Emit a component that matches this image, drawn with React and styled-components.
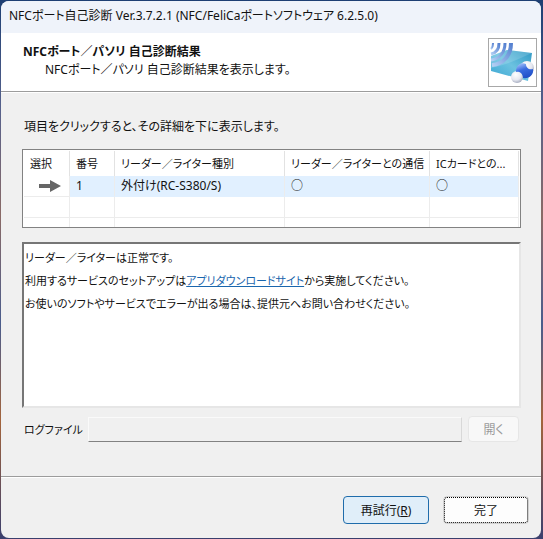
import styled, { createGlobalStyle } from "styled-components";

const colors = {
  face: "#f0f0f0",
  titleBar: "#eff3fa",
  text: "#111",
  shadow: "#828282",
  grid: "#ececec",
  selected: "#e1f0ff",
  link: "#1a66ad",
};

const GlobalStyle = createGlobalStyle`
  * {
    box-sizing: border-box;
  }
  body {
    margin: 0;
    color: ${colors.text};
    font-family: "Noto Sans", "Noto Sans CJK JP", sans-serif;
    font-size: 12px;
    font-feature-settings: "palt";
  }
  button, input {
    font: inherit;
    font-feature-settings: inherit;
    color: inherit;
  }
`

const Desktop = styled.div`
  display: flex;
  min-height: 100vh;
  padding: 1px 2px 1px 1px;
  background: linear-gradient(180deg, #1d3f73 0%, #56618c 20%, #8a6a66 40%, #4a5c8c 60%, #a3643c 78%, #3a3f6e 100%);
`

const Window = styled.main`
  flex: 1;
  min-width: 0;
  display: flex;
  flex-direction: column;
  background: ${colors.face};
  border-radius: 8px;
  overflow: hidden;
`

const TitleBar = styled.header`
  height: 32px;
  padding: 0 8px;
  line-height: 30px;
  background: ${colors.titleBar};
`

const Banner = styled.section`
  display: flex;
  justify-content: space-between;
  height: 59px;
  padding: 5px 4px 0 22px;
  background: #fff;
  border-bottom: 1px solid #9c9c9c;
`

const Heading = styled.h1`
  margin: 5px 0 0;
  font-size: 12px;
  line-height: 18px;
`

const SubHeading = styled.p`
  margin: 0 0 0 22px;
  line-height: 18px;
`

const LogoFrame = styled.div`
  width: 49px;
  height: 49px;
  border: 1px solid #a8a8a8;
  background: #fff;
`

const Content = styled.section`
  flex: 1;
  display: flex;
  flex-direction: column;
  padding: 24px 20px 0 21px;
  border-top: 1px solid #fff;
`

const Guide = styled.p`
  margin: 0 0 12px 2px;
  line-height: 20px;
`

const ListBox = styled.div`
  height: 79px;
  padding: 1px;
  border: 1px solid ${colors.shadow};
  background: #fff;
  overflow: hidden;
`

const ResultTable = styled.table`
  width: 100%;
  table-layout: fixed;
  border-collapse: separate;
  border-spacing: 0;
`

const Column = styled.col`
  width: ${({ $width }) => $width};
`

const HeadCell = styled.th`
  height: 25px;
  padding: 0 0 0 6px;
  border-right: 1px solid #e2e2e2;
  font-size: 11px;
  font-weight: normal;
  line-height: 16px;
  text-align: left;
  white-space: nowrap;
`

const Cell = styled.td`
  height: 21px;
  padding: 0 0 0 6px;
  border-right: 1px solid ${colors.grid};
  border-bottom: 1px solid ${({ $selected }) => ($selected ? colors.selected : colors.grid)};
  background: ${({ $selected }) => ($selected ? colors.selected : "#fff")};
  line-height: 16px;
  white-space: nowrap;
`

const RowArrow = styled.svg`
  display: block;
  margin-left: 9px;
`

const Details = styled.div`
  flex: 1;
  margin-top: 14px;
  padding: 2px 1px;
  border: 2px solid;
  border-color: #767676 #e6e6e6 #e6e6e6 #767676;
  background: #fff;
  font-size: 11px;
  line-height: 23px;
`

const Line = styled.p`
  margin: 0;
`

const Link = styled.a`
  color: ${colors.link};
`

const LogRow = styled.div`
  display: flex;
  align-items: center;
  height: 26px;
  margin: 8px 2px 34px;
`

const LogLabel = styled.label`
  width: 64px;
  font-size: 11px;
  white-space: nowrap;
`

const LogInput = styled.input`
  flex: 1;
  min-width: 0;
  height: 25px;
  margin-right: 6px;
  border: 1px solid;
  border-color: #fafafa #d8d8d8 #828282 #fafafa;
  background: ${colors.face};
`

const Footer = styled.footer`
  display: flex;
  justify-content: flex-end;
  gap: 14px;
  padding: 19px 12px 14px;
  border-top: 1px solid #9c9c9c;
  box-shadow: inset 0 1px #fff;
`

const Button = styled.button`
  width: 86px;
  height: 28px;
  padding: 0;
  border: 1px solid #d0d0d0;
  border-radius: 4px;
  background: #fdfdfd;
`

const OpenButton = styled(Button)`
  width: 51px;
  height: 26px;
  border-color: #e6e6e6;
  background: #f8f8f8;
  color: #9a9a9a;
`

const RetryButton = styled(Button)`
  border-color: #1f6cab;
  background: #e0eef9;
`

const FinishButton = styled(Button)`
  outline: 1px dotted #000;
  outline-offset: -2px;
`

const columns = [
  { label: "選択", width: "46px" },
  { label: "番号", width: "45px" },
  { label: "リーダー／ライター種別", width: "170px" },
  { label: "リーダー／ライターとの通信", width: "145px" },
  { label: "ICカードとの...", width: "auto" },
];

function Logo() {
  return (
    <svg width="47" height="47" viewBox="0 0 47 47" aria-hidden="true">
      <defs>
        <linearGradient id="card" x1="0" y1="1" x2="1" y2="0">
          <stop offset="0" stopColor="#38a5d2" />
          <stop offset="0.5" stopColor="#6cc2e0" />
          <stop offset="1" stopColor="#2e98c4" />
        </linearGradient>
        <linearGradient id="wave" x1="1" y1="0" x2="0" y2="1">
          <stop offset="0" stopColor="#5580d0" />
          <stop offset="1" stopColor="#b4d0f4" />
        </linearGradient>
        <linearGradient id="blue" x1="0.3" y1="0" x2="0.7" y2="1">
          <stop offset="0" stopColor="#9dbcf8" />
          <stop offset="0.4" stopColor="#3a6ce0" />
          <stop offset="1" stopColor="#1e4cc4" />
        </linearGradient>
        <radialGradient id="white" cx="0.4" cy="0.3" r="0.75">
          <stop offset="0" stopColor="#fff" />
          <stop offset="0.6" stopColor="#e6e8f0" />
          <stop offset="1" stopColor="#9ca3b8" />
        </radialGradient>
      </defs>
      <path d="M2 17 L18 11 L43 14 L39 42 L2 32 Z" fill="url(#card)" />
      <path d="M2 29 C14 27 28 21 43 14 L18 11 L2 17 Z" fill="#fff" opacity="0.15" />
      <g fill="none" stroke="url(#wave)">
        <path d="M4 4 C4 7 3 9 2 10" strokeWidth="2" />
        <path d="M10 4 C10 10 7 14 2 15" strokeWidth="3" />
        <path d="M16 4 C16 14 10 20 2 21" strokeWidth="3" />
        <path d="M22 4 C22 17 14 25 3 26" strokeWidth="4" />
      </g>
      <circle cx="38" cy="29" r="7" fill="url(#white)" />
      <circle cx="28" cy="38" r="6" fill="url(#white)" />
      <path d="M27 33 C27 25 33 23 37 25 C37 29 40 31 44 30 C45 36 40 40 34 39 C34 35 31 32 27 33 Z" fill="url(#blue)" />
    </svg>
  );
}

function App() {
  return (
    <>
      <GlobalStyle />
      <Desktop>
        <Window>
          <TitleBar>NFCポート自己診断 Ver.3.7.2.1 (NFC/FeliCaポートソフトウェア 6.2.5.0)</TitleBar>
          <Banner>
            <div>
              <Heading>NFCポート／パソリ 自己診断結果</Heading>
              <SubHeading>NFCポート／パソリ 自己診断結果を表示します。</SubHeading>
            </div>
            <LogoFrame>
              <Logo />
            </LogoFrame>
          </Banner>
          <Content>
            <Guide>項目をクリックすると、その詳細を下に表示します。</Guide>
            <ListBox>
              <ResultTable>
                <colgroup>
                  {columns.map(({ label, width }) => (
                    <Column key={label} $width={width} />
                  ))}
                </colgroup>
                <thead>
                  <tr>
                    {columns.map(({ label }) => (
                      <HeadCell key={label}>{label}</HeadCell>
                    ))}
                  </tr>
                </thead>
                <tbody>
                  <tr>
                    <Cell>
                      <RowArrow width="22" height="12" viewBox="0 0 22 12" role="img" aria-label="選択中">
                        <path d="M0 4 H11 V0 L22 6 L11 12 V8 H0 Z" fill="#666" />
                      </RowArrow>
                    </Cell>
                    <Cell $selected>1</Cell>
                    <Cell $selected>外付け(RC-S380/S)</Cell>
                    <Cell $selected>○</Cell>
                    <Cell $selected>○</Cell>
                  </tr>
                  {["blank-1", "blank-2"].map((row) => (
                    <tr key={row}>
                      {columns.map(({ label }) => (
                        <Cell key={label} />
                      ))}
                    </tr>
                  ))}
                </tbody>
              </ResultTable>
            </ListBox>
            <Details>
              <Line>リーダー／ライターは正常です。</Line>
              <Line>
                利用するサービスのセットアップは<Link href="#download">アプリダウンロードサイト</Link>から実施してください。
              </Line>
              <Line>お使いのソフトやサービスでエラーが出る場合は、提供元へお問い合わせください。</Line>
            </Details>
            <LogRow>
              <LogLabel htmlFor="log-file">ログファイル</LogLabel>
              <LogInput id="log-file" type="text" readOnly />
              <OpenButton type="button" disabled>開く</OpenButton>
            </LogRow>
          </Content>
          <Footer>
            <RetryButton type="button" accessKey="r">再試行(<u>R</u>)</RetryButton>
            <FinishButton type="button">完了</FinishButton>
          </Footer>
        </Window>
      </Desktop>
    </>
  );
}

export default App;
